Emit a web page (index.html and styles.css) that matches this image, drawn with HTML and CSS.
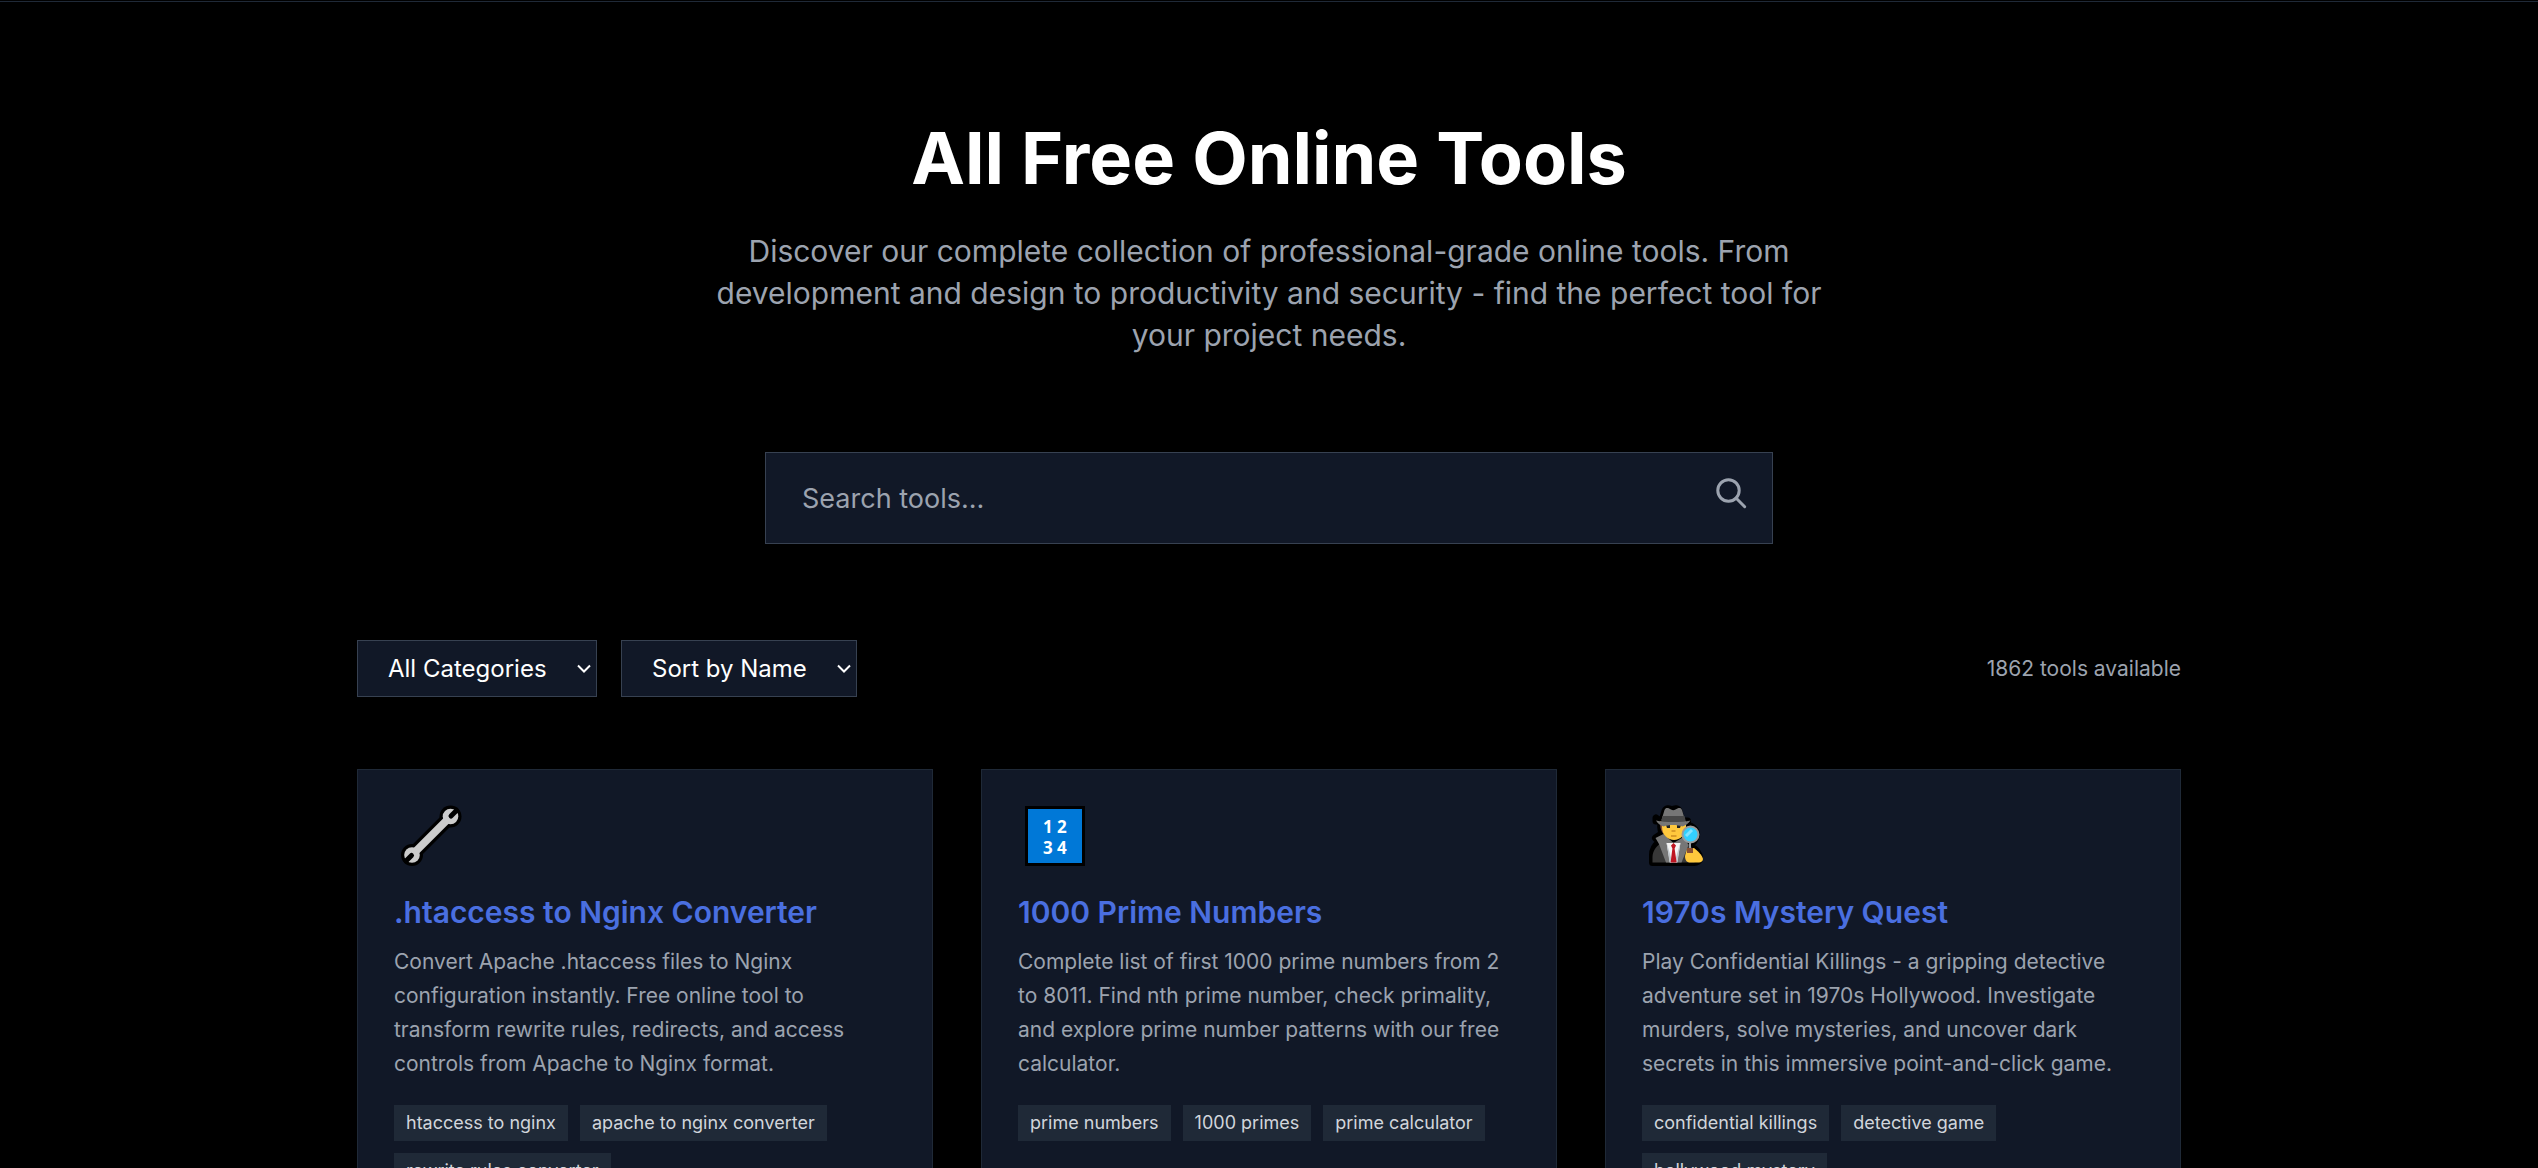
FILE: index.html
```html
<!DOCTYPE html>
<html lang="en">
<head>
<meta charset="utf-8">
<meta name="viewport" content="width=device-width, initial-scale=1">
<title>All Free Online Tools</title>
<link rel="stylesheet" href="styles.css">
</head>
<body>
<main class="page">
  <header class="hero">
    <h1 class="hero-title">All Free Online Tools</h1>
    <p class="hero-text">Discover our complete collection of professional-grade online tools. From development and design to productivity and security - find the perfect tool for your project needs.</p>
  </header>

  <form class="search" role="search">
    <input class="search-input" type="search" placeholder="Search tools..." aria-label="Search tools">
    <svg class="search-icon" viewBox="0 0 32 32" aria-hidden="true"><circle cx="12.500" cy="12.500" r="10.700"/><path d="M20 20l8.700 8.700"/></svg>
  </form>

  <div class="toolbar">
    <div class="filters">
      <div class="select-box">
        <select class="select" aria-label="Category"><option>All Categories</option></select>
        <svg class="chevron" viewBox="0 0 14 9" aria-hidden="true"><path d="M1 1.500l6 6 6-6"/></svg>
      </div>
      <div class="select-box">
        <select class="select" aria-label="Sort order"><option>Sort by Name</option></select>
        <svg class="chevron" viewBox="0 0 14 9" aria-hidden="true"><path d="M1 1.500l6 6 6-6"/></svg>
      </div>
    </div>
    <p class="count">1862 tools available</p>
  </div>

  <section class="grid" aria-label="Tools">
    <article class="card">
      <svg class="card-icon" viewBox="0 0 72 72" aria-hidden="true">
        <g fill="#000" stroke="#000">
          <path stroke-width="14" stroke-linecap="round" d="M18 54L56 16"/>
          <circle cx="18" cy="54" r="11" stroke="none"/><circle cx="56.500" cy="15.500" r="11" stroke="none"/>
        </g>
        <path stroke="#ccc" stroke-width="7.500" d="M20 52L54 18"/>
        <circle cx="18" cy="54" r="7.800" fill="#ccc"/><circle cx="56.500" cy="15.500" r="7.800" fill="#ccc"/>
        <path stroke="#000" stroke-width="5" stroke-linecap="round" d="M17.500 54.500l-5.500 5.500M57 15l5.500-5.500"/>
      </svg>
      <h2 class="card-title"><a href="#htaccess-to-nginx">.htaccess to Nginx Converter</a></h2>
      <p class="card-text">Convert Apache .htaccess files to Nginx configuration instantly. Free online tool to transform rewrite rules, redirects, and access controls from Apache to Nginx format.</p>
      <ul class="tags"><li>htaccess to nginx</li><li>apache to nginx converter</li><li>rewrite rules converter</li></ul>
    </article>

    <article class="card">
      <svg class="card-icon" viewBox="0 0 72 72" aria-hidden="true">
        <path fill="#000" d="M7 5h60v60H7z"/>
        <path fill="#0078d7" d="M10 8h54v54H10z"/>
        <g class="digits"><text x="25" y="32">1</text><text x="39" y="32">2</text><text x="25" y="53">3</text><text x="39" y="53">4</text></g>
      </svg>
      <h2 class="card-title"><a href="#prime-numbers">1000 Prime Numbers</a></h2>
      <p class="card-text">Complete list of first 1000 prime numbers from 2 to 8011. Find nth prime number, check primality, and explore prime number patterns with our free calculator.</p>
      <ul class="tags"><li>prime numbers</li><li>1000 primes</li><li>prime calculator</li></ul>
    </article>

    <article class="card">
      <svg class="card-icon" viewBox="0 0 72 72" aria-hidden="true">
        <path fill="#000" stroke="#000" stroke-width="7" stroke-linejoin="round" d="M10.500 61.500V54c0-6 3-10 7-13l-4-4 6-4 2 1c-3-3-3-9-2.500-13l-5-4V20h6l3-10c1-2.500 4-3 7-1 3-2 6-1.500 7 1l2.500 10h6v1l-3 3c10 0 14 8 11 13-1 4-3 5-5 6l0 3c5 1 9 7 9 11 0 3-3 4.500-5 4.500z"/>
        <path fill="#383838" d="M10.500 61.500V56c0-7 5-12 10-15h23c6 3 9 8 9 20.500z"/>
        <path fill="#767676" d="M13.500 37l8-4 10 9 10-6 5 8-7 17.500H24L17 43z"/>
        <path fill="#f4f4f4" d="M24.500 42h14L35 61.500h-7z"/>
        <path fill="#c4cad0" d="M24.500 41l6 20.500h-3zM38.500 41l-6 20.500h3z"/>
        <path fill="#be1622" d="M29 44.500l2.500-2.500 2.500 2.500-1.400 3 2 14h-6l1.800-14z"/>
        <path fill="#885034" d="M18 20h5v14c-4-2-5-8-5-14z"/>
        <path fill="#ffc83d" d="M20 20h24v6c0 8-6 13-12 13s-12-5-12-13z"/>
        <path fill="#222" d="M24 24h4v3h-3zM39 24h-4v3h3z"/>
        <path fill="#d99b27" d="M29.500 29h4v2h-4zM29 34h5.500v2H29z"/>
        <path fill="#767676" d="M19.500 19l3-10c1-3 4-2.500 6.500-.5 1.500 1 3 1 4.500 0C36 6.500 39 6 40 9l3 10z"/>
        <path fill="#484848" d="M20.500 15h22l1.500 6H19z"/>
        <path fill="#767676" d="M14 19.500c9 2 26 2 34.500 0-2 3-5 5-8 6-6-2-13-2-19 0-3-1-6-3-7.500-6z"/>
        <path fill="#ffc83d" d="M43 55l2-7 7-1c4 3 8 7 9 11 0 2-2 3.500-4 3.500h-9c-3 0-5-2-5-6.500z"/>
        <path stroke="#9aa0a6" stroke-width="2" d="M48 40v8"/>
        <path fill="#885034" d="M45 47h6v5h-6z"/>
        <circle cx="48.500" cy="33.500" r="8" fill="#33cfff" stroke="#9b9b9b" stroke-width="2"/>
        <path stroke="#83e2ff" stroke-width="3" d="M44 35l6-6"/>
      </svg>
      <h2 class="card-title"><a href="#mystery-quest">1970s Mystery Quest</a></h2>
      <p class="card-text">Play Confidential Killings - a gripping detective adventure set in 1970s Hollywood. Investigate murders, solve mysteries, and uncover dark secrets in this immersive point-and-click game.</p>
      <ul class="tags"><li>confidential killings</li><li>detective game</li><li>hollywood mystery</li></ul>
    </article>
  </section>
</main>
</body>
</html>
```
FILE: styles.css
```css
* {
  box-sizing: border-box;
  margin: 0;
  padding: 0;
}

html {
  background: #000;
  scrollbar-width: none;
}

body {
  margin-top: 1px;
  border-top: 1px solid #1f2937;
  color: #fff;
  font-family: Inter, "Liberation Sans", sans-serif;
}

.page {
  max-width: 1920px;
  margin: 0 auto;
  padding: 120px 48px 96px;
}

.hero {
  text-align: center;
}

.hero-title {
  font-size: 72px;
  line-height: 72px;
  font-weight: 700;
}

.hero-text {
  max-width: 1152px;
  margin: 36px auto 0;
  color: #9ca3af;
  font-size: 30px;
  line-height: 42px;
}

.search {
  position: relative;
  max-width: 1008px;
  margin: 96px auto;
}

.search-input {
  display: block;
  width: 100%;
  height: 92px;
  padding: 0 84px 0 36px;
  background: #111827;
  border: 1px solid #374151;
  border-radius: 0;
  color: #fff;
  font: inherit;
  font-size: 27px;
  appearance: none;
}

.search-input::placeholder {
  color: #9ca3af;
  opacity: 1;
}

.search-icon {
  position: absolute;
  top: 26px;
  right: 25px;
  width: 32px;
  height: 32px;
  fill: none;
  stroke: #9ca3af;
  stroke-width: 3;
  stroke-linecap: round;
}

.toolbar {
  display: flex;
  align-items: center;
  justify-content: space-between;
  margin-bottom: 72px;
}

.filters {
  display: flex;
  gap: 24px;
}

.select-box {
  position: relative;
}

.select {
  display: block;
  height: 57px;
  padding: 0 49px 0 30px;
  background: #111827;
  border: 1px solid #374151;
  border-radius: 0;
  color: #fff;
  font: inherit;
  font-size: 24px;
  appearance: none;
}

.chevron {
  position: absolute;
  top: 24px;
  right: 6px;
  width: 14px;
  height: 9px;
  fill: none;
  stroke: #fff;
  stroke-width: 2;
  pointer-events: none;
}

.count {
  color: #9ca3af;
  font-size: 21px;
  line-height: 30px;
}

.grid {
  display: grid;
  grid-template-columns: repeat(3, 1fr);
  gap: 48px;
}

.card {
  padding: 31px 36px 36px;
  background: #111827;
  border: 1px solid #1f2937;
}

.card-icon {
  display: block;
  width: 72px;
  height: 72px;
  fill: none;
}

.digits {
  fill: #fff;
  font: 700 17px "Open Sans", sans-serif;
}

.card-title {
  margin-top: 18px;
  font-size: 30px;
  line-height: 42px;
  font-weight: 600;
}

.card-title a {
  color: #4a6fe0;
  text-decoration: none;
}

.card-text {
  margin-top: 12px;
  color: #9ca3af;
  font-size: 21px;
  line-height: 34px;
}

.tags {
  display: flex;
  flex-wrap: wrap;
  gap: 12px;
  margin-top: 24px;
  list-style: none;
}

.tags li {
  padding: 6px 12px;
  background: #1f2937;
  color: #d1d5db;
  font-size: 18px;
  line-height: 24px;
}
```
